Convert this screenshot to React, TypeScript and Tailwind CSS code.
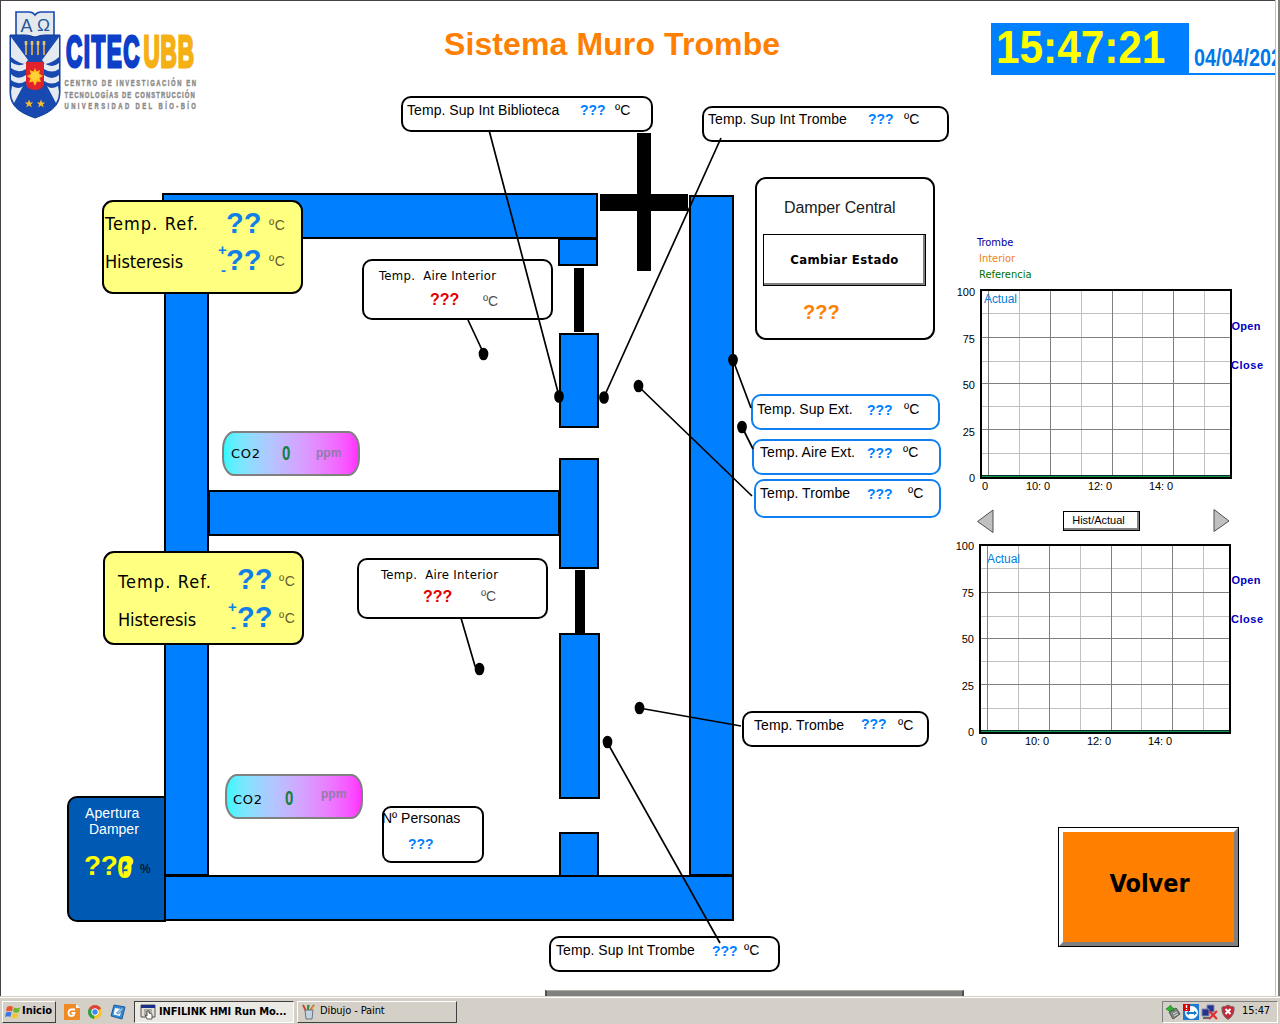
import React from "react";

const ARIAL = "font-['Liberation_Sans',Arial,sans-serif]";
const TAHOMA = "font-['DejaVu_Sans_Condensed','DejaVu_Sans',sans-serif] [font-stretch:condensed]";

/* A label pinned on the plan */
function T({ c, children }: { c: string; children: React.ReactNode }) {
  return <span className={`absolute whitespace-pre leading-none ${c}`}>{children}</span>;
}

function Wall({ c }: { c: string }) {
  return <div className={`absolute border-2 border-black bg-[#0080ff] ${c}`} />;
}

function Box({ c, children }: { c: string; children?: React.ReactNode }) {
  return <div className={`absolute border-2 ${c}`}>{children}</div>;
}

function Logo() {
  return (
    <svg width="192" height="112" viewBox="8 8 192 112" className="ml-2 mt-2 block">
      <path d="M16 12 H29 Q33 12 35 15 Q37 12 41 12 H54 V37 H16 Z" fill="#e4e9ee" stroke="#1749b0" strokeWidth="1.6" />
      <path d="M10 35 H24 Q32 35 35 38 Q38 35 46 35 H60 V92 C60 107 49 113 35 118 C21 113 10 107 10 92 Z" fill="#1749b0" stroke="#0f3c98" />
      <path d="M11 37 L28 60 L25 64 Q18 63 11 57 Z M59 37 L42 60 L45 64 Q52 63 59 57 Z" fill="#e4eaf0" />
      <path d="M11 62 Q18 68 26 63 V69 Q18 74 11 68 Z M11 74 Q18 81 26 75 V81 Q18 86 11 80 Z M44 63 Q52 69 59 63 V69 Q52 74 44 69 Z M44 75 Q52 81 59 75 V81 Q52 86 44 81 Z" fill="#e4eaf0" />
      <path d="M12 86 Q19 90 23 86 L14 103 Q11 98 11 92 Z M58 86 Q51 90 47 86 L56 103 Q59 98 59 92 Z" fill="#e4eaf0" />
      <path d="M26 43 V55 M32 43 V55 M38 43 V55 M44 43 V55" stroke="#c79b5b" strokeWidth="2" />
      <path d="M26 41 V45 M32 41 V45 M38 41 V45 M44 41 V45" stroke="#e9c06b" strokeWidth="2.600" />
      <path d="M26 62 H44 V82 Q44 90 35 90 Q26 90 26 82 Z" fill="#e0232a" />
      <path d="M35 68 L36.5 71.5 L40 70 L39 73.5 L43 76 L39.500 78 L41 82 L37 81.500 L35 86 L33 81.500 L29 82.500 L30.500 78.500 L27 76 L31 74 L29.500 70 L33.500 71.500 Z" fill="#ffc31f" />
      <circle cx="35" cy="76" r="4" fill="#ffd23b" />
      <path d="M29 99.500 l1.200 3 h3 l-2.400 1.900 1 3.100 -2.800 -1.900 -2.800 1.900 1 -3.100 -2.400 -1.900 h3 Z M41 99.500 l1.200 3 h3 l-2.400 1.900 1 3.100 -2.800 -1.900 -2.800 1.900 1 -3.100 -2.400 -1.900 h3 Z" fill="#f5bc2c" />
      <g className={ARIAL}>
        <text x="20.500" y="31.500" fontSize="18" fontWeight="normal" fill="#27559e" textLength="12" lengthAdjust="spacingAndGlyphs">Α</text>
        <text x="37" y="30.500" fontSize="17" fontWeight="normal" fill="#27559e" textLength="13" lengthAdjust="spacingAndGlyphs">Ω</text>
        <g transform="translate(66 0) scale(.5 1)" fontSize="45" fontWeight="bold" strokeWidth="3" letterSpacing="3">
          <text x="0" y="67.500" fill="#0d3fc8" stroke="#0d3fc8" textLength="150">CITEC</text>
          <text x="155" y="67.500" fill="#f5b016" stroke="#f5b016" textLength="104">UBB</text>
        </g>
      </g>
      <g className={ARIAL} fontSize="9.500" fontWeight="bold" fill="#8c8c8c" stroke="#8c8c8c" strokeWidth=".5">
        <g transform="translate(64.500 0) scale(.62 1)" letterSpacing="1">
          <text x="0" y="86.500" textLength="213">CENTRO DE INVESTIGACIÓN EN</text>
          <text x="0" y="98" textLength="211">TECNOLOGÍAS DE CONSTRUCCIÓN</text>
          <text x="0" y="109" textLength="213">UNIVERSIDAD DEL BÍO-BÍO</text>
        </g>
      </g>
    </svg>
  );
}

function Header() {
  return (
    <header className={`flex h-[125px] w-[1275px] overflow-hidden ${ARIAL} font-bold`}>
      <div className="w-[444px]"><Logo /></div>
      <h1 className="mt-7 w-[547px] text-[32px] leading-none tracking-[.1px] whitespace-nowrap text-[#ff8000]">Sistema Muro Trombe</h1>
      <div className="mt-[23px] h-[52px] w-[198px] bg-[#0080ff] pt-[1px] pl-[5px] text-[46px] leading-none text-[#ffff00]">
        <span className="inline-block origin-left scale-x-[.92]">15:47:21</span>
      </div>
      <div className="mt-[23px] h-[52px] w-[86px] overflow-hidden border-b-2 border-[#0080ff] pt-[24px] pl-[5px] text-[23px] leading-none whitespace-nowrap text-[#0078e8]">
        <span className="inline-block origin-left scale-x-[.86]">04/04/2022</span>
      </div>
    </header>
  );
}

function Chart({ c, ax, ay, cx, dy }: { c: string; ax: number; ay: number; cx: number; dy: number }) {
  return (
    <svg width="323" height="210" viewBox="0 0 323 210" className={`block shrink-0 ${c}`}>
      <g shapeRendering="crispEdges" stroke="#c0c0c0">
        {[67.5, 129.5, 190.5, 252.5].map((x) => <path key={x} d={`M${x} 6V193`} />)}
        {[29.5, 77.5, 122.5, 169.5].map((y) => <path key={y} d={`M29 ${y}H279`} />)}
      </g>
      <g shapeRendering="crispEdges" stroke="#808080">
        {[36.5, 98.5, 160.5, 221.5].map((x) => <path key={x} d={`M${x} 6V193`} />)}
        {[53.5, 99.5, 145.5].map((y) => <path key={y} d={`M29 ${y}H279`} />)}
      </g>
      <g shapeRendering="crispEdges">
        <rect x="29" y="6" width="250" height="188" fill="none" stroke="#000" strokeWidth="2" />
        <path d="M30 191.500H278" stroke="#003030" />
        <path d="M30 192.500H278" stroke="#169447" />
      </g>
      <g className="font-['Liberation_Sans',Arial,sans-serif] text-[11px]">
        <g textAnchor="end">
          <text x="23" y={12 - dy}>100</text>
          <text x="23" y={59 - dy}>75</text>
          <text x="23" y={105 - dy}>50</text>
          <text x="23" y={152 - dy}>25</text>
          <text x="23" y={198 - dy}>0</text>
        </g>
        <text x="30" y="205.500">0</text>
        <text x="74" y="205.500" textLength="24">10: 0</text>
        <text x="136" y="205.500" textLength="24">12: 0</text>
        <text x="197" y="205.500" textLength="24">14: 0</text>
        <text x={ax} y={ay} fontSize="12" fill="#0080e0" textLength="33">Actual</text>
        <g fill="#0000c0" fontWeight="bold">
          <text x={cx} y={46 - dy} textLength="29">Open</text>
          <text x={cx - 0.5} y={85 - dy} textLength="32">Close</text>
        </g>
      </g>
    </svg>
  );
}

function Trends() {
  return (
    <aside className="ml-[952px] flex w-[323px] flex-col pt-[112px]">
      <div className={`flex flex-col gap-[5px] pl-[27px] text-[11px] leading-[11px] ${TAHOMA}`}>
        <span className="-ml-[2px] text-[#0000a0]">Trombe</span>
        <span className="text-[#f08020]">Interior</span>
        <span className="text-[#007000]">Referencia</span>
      </div>
      <Chart c="mt-[4px]" ax={32} ay={19} cx={279.5} dy={0} />
      <div className="mt-[15px] flex h-[24px] w-[278px] justify-between pl-[25px]">
        <svg width="17" height="24" className="block"><path d="M.5 12.500L16 1V23.500Z" fill="#c0c0c0" stroke="#505050" /></svg>
        <div className={`ml-[69px] mr-auto mt-[2px] flex h-[20px] w-[77px] items-center justify-center border border-black bg-white text-[11px] shadow-[inset_-2px_-2px_0_#808080] ${ARIAL}`}>
          <span className="pr-[6px] pb-px">Hist/Actual</span>
        </div>
        <svg width="17" height="24" className="block"><path d="M1 .500V22.500L16 12Z" fill="#c0c0c0" stroke="#505050" /></svg>
      </div>
      <Chart c="-ml-px mt-[6px]" ax={36} ay={24} cx={280.5} dy={1} />
      <button className={`mt-[78px] ml-[106px] h-[120px] w-[181px] border border-black text-[25px] font-bold text-black ${TAHOMA}`}>
        <span className="flex h-full w-full items-center justify-center border-4 border-t-white border-r-[#808080] border-b-[#808080] border-l-white bg-[#ff8000] pb-[7px] pl-[2px]">Volver</span>
      </button>
    </aside>
  );
}

/* Reference temperature and hysteresis card */
function RefCard({ c, pad }: { c: string; pad: string }) {
  return (
    <Box c={`h-[94px] w-[201px] rounded-[11px] border-black bg-[#ffff80] ${c}`}>
      <div className={`absolute h-full w-full text-black ${pad}`}>
        <T c={`left-[2px] top-[13px] text-[18px] tracking-[1.1px] ${TAHOMA}`}>Temp. Ref.</T>
        <T c={`left-[2px] top-[51px] text-[18px] tracking-[-0.1px] ${TAHOMA}`}>Histeresis</T>
      </div>
    </Box>
  );
}

function Plan() {
  const q = "text-[14px] font-bold text-[#0080ff]";
  const n = "text-[14px] tracking-[.06px]";
  const aire = "text-[13px] tracking-[.3px]";
  const unit = "text-[14px] tracking-[.6px] text-[#60602c]";
  return (
    <div className={`absolute inset-0 text-black ${ARIAL}`}>
      <Wall c="left-[164px] top-[220px] h-[656px] w-[45px]" />
      <Wall c="left-[162px] top-[193px] h-[46px] w-[436px]" />
      <Wall c="left-[558px] top-[238px] h-[28px] w-[40px]" />
      <Wall c="left-[559px] top-[333px] h-[95px] w-[40px]" />
      <Wall c="left-[559px] top-[458px] h-[111px] w-[40px]" />
      <Wall c="left-[559px] top-[633px] h-[166px] w-[41px]" />
      <Wall c="left-[559px] top-[832px] h-[45px] w-[40px]" />
      <Wall c="left-[208px] top-[490px] h-[46px] w-[352px]" />
      <Wall c="left-[689px] top-[195px] h-[681px] w-[45px]" />
      <Wall c="left-[164px] top-[875px] h-[46px] w-[570px]" />
      <div className="absolute left-[574px] top-[268px] h-[64px] w-[10px] bg-black" />
      <div className="absolute left-[575px] top-[570px] h-[63px] w-[10px] bg-black" />
      <div className="absolute left-[637px] top-[133px] h-[138px] w-[14px] bg-black" />
      <div className="absolute left-[600px] top-[194px] h-[17px] w-[88px] bg-black" />

      <Box c="left-[401px] top-[96px] h-[36px] w-[252px] rounded-[10px] border-black bg-white" />
      <T c={`left-[407px] top-[103px] ${n}`}>Temp. Sup Int Biblioteca</T>
      <T c={`left-[580px] top-[103px] ${q}`}>???</T>
      <T c={`left-[615px] top-[103px] ${n}`}>ºC</T>

      <Box c="left-[702px] top-[106px] h-[36px] w-[247px] rounded-[10px] border-black bg-white" />
      <T c={`left-[708px] top-[112px] ${n}`}>Temp. Sup Int Trombe</T>
      <T c={`left-[868px] top-[112px] ${q}`}>???</T>
      <T c={`left-[904px] top-[112px] ${n}`}>ºC</T>

      <Box c="left-[362px] top-[259px] h-[61px] w-[191px] rounded-[10px] border-black bg-white" />
      <T c={`left-[379px] top-[269px] ${aire} ${TAHOMA}`}>Temp.  Aire Interior</T>
      <T c="left-[430px] top-[292px] text-[16px] font-bold text-[#e00000]">???</T>
      <T c="left-[483px] top-[294px] text-[14px] text-[#505050]">ºC</T>

      <Box c="left-[357px] top-[558px] h-[61px] w-[191px] rounded-[10px] border-black bg-white" />
      <T c={`left-[381px] top-[568px] ${aire} ${TAHOMA}`}>Temp.  Aire Interior</T>
      <T c="left-[423px] top-[589px] text-[16px] font-bold text-[#e00000]">???</T>
      <T c="left-[481px] top-[589px] text-[14px] text-[#505050]">ºC</T>

      <Box c="left-[755px] top-[177px] h-[163px] w-[180px] rounded-[11px] border-black bg-white" />
      <T c="left-[784px] top-[200px] text-[16px] tracking-[-.1px] text-[#202020]">Damper Central</T>
      <div className={`absolute left-[763px] top-[234px] flex h-[52px] w-[163px] items-center justify-center border border-black bg-white text-[13px] font-bold tracking-[.35px] shadow-[inset_-2px_-2px_0_#808080] ${TAHOMA}`}>Cambiar Estado</div>
      <T c="left-[803px] top-[302px] text-[20px] font-bold text-[#ff8000]">???</T>

      <Box c="left-[751px] top-[394px] h-[36px] w-[189px] rounded-[10px] border-[#1080f0] bg-white" />
      <T c={`left-[757px] top-[402px] ${n}`}>Temp. Sup Ext.</T>
      <T c={`left-[867px] top-[403px] ${q}`}>???</T>
      <T c={`left-[904px] top-[402px] ${n}`}>ºC</T>
      <Box c="left-[752px] top-[439px] h-[36px] w-[189px] rounded-[10px] border-[#1080f0] bg-white" />
      <T c={`left-[760px] top-[445px] ${n}`}>Temp. Aire Ext.</T>
      <T c={`left-[867px] top-[446px] ${q}`}>???</T>
      <T c={`left-[903px] top-[445px] ${n}`}>ºC</T>
      <Box c="left-[754px] top-[479px] h-[39px] w-[187px] rounded-[10px] border-[#1080f0] bg-white" />
      <T c={`left-[760px] top-[486px] ${n}`}>Temp. Trombe</T>
      <T c={`left-[867px] top-[487px] ${q}`}>???</T>
      <T c={`left-[908px] top-[486px] ${n}`}>ºC</T>

      <Box c="left-[742px] top-[711px] h-[36px] w-[187px] rounded-[10px] border-black bg-white" />
      <T c={`left-[754px] top-[718px] ${n}`}>Temp. Trombe</T>
      <T c={`left-[861px] top-[717px] ${q}`}>???</T>
      <T c={`left-[898px] top-[718px] ${n}`}>ºC</T>

      <Box c="left-[549px] top-[936px] h-[36px] w-[231px] rounded-[10px] border-black bg-white" />
      <T c={`left-[556px] top-[943px] ${n}`}>Temp. Sup Int Trombe</T>
      <T c={`left-[712px] top-[944px] ${q}`}>???</T>
      <T c={`left-[744px] top-[943px] ${n}`}>ºC</T>

      <Box c="left-[382px] top-[806px] h-[57px] w-[102px] rounded-[9px] border-black bg-white" />
      <T c="left-[382px] top-[811px] text-[14px]">Nº Personas</T>
      <T c={`left-[408px] top-[837px] ${q}`}>???</T>

      <RefCard c="left-[102px] top-[200px]" pad="left-[-1px] top-0" />
      <T c="left-[226px] top-[209px] text-[29px] font-bold text-[#1080e8]">??</T>
      <T c={`left-[269px] top-[218px] ${unit}`}>ºC</T>
      <T c="left-[226px] top-[246px] text-[29px] font-bold text-[#1080e8]">??</T>
      <T c={`left-[269px] top-[254px] ${unit}`}>ºC</T>
      <T c="left-[218px] top-[242px] text-[15px] font-bold text-[#1080e8]">+</T>
      <T c="left-[221px] top-[262px] text-[15px] font-bold text-[#1080e8]">-</T>

      <RefCard c="left-[103px] top-[551px]" pad="left-[11px] top-[7px]" />
      <T c="left-[237px] top-[565px] text-[29px] font-bold text-[#1080e8]">??</T>
      <T c={`left-[279px] top-[574px] ${unit}`}>ºC</T>
      <T c="left-[237px] top-[603px] text-[29px] font-bold text-[#1080e8]">??</T>
      <T c={`left-[279px] top-[611px] ${unit}`}>ºC</T>
      <T c="left-[228px] top-[599px] text-[15px] font-bold text-[#1080e8]">+</T>
      <T c="left-[231px] top-[619px] text-[15px] font-bold text-[#1080e8]">-</T>

      <Box c="left-[222px] top-[431px] h-[45px] w-[138px] rounded-[12px/18px] border-[#808080] bg-linear-to-r from-[#30f8ff] to-[#ff30ff]" />
      <T c="left-[231px] top-[447px] text-[13px] tracking-[.7px] font-['DejaVu_Sans',sans-serif]">CO2</T>
      <T c="left-[282px] top-[443px] origin-left scale-x-[.75] text-[20px] font-bold text-[#108040]">0</T>
      <T c="left-[316px] top-[447px] text-[12px] font-bold text-[#907ca8]">ppm</T>
      <Box c="left-[225px] top-[774px] h-[45px] w-[138px] rounded-[12px/18px] border-[#808080] bg-linear-to-r from-[#30f8ff] to-[#ff30ff]" />
      <T c="left-[233px] top-[793px] text-[13px] tracking-[.7px] font-['DejaVu_Sans',sans-serif]">CO2</T>
      <T c="left-[285px] top-[788px] origin-left scale-x-[.75] text-[20px] font-bold text-[#108040]">0</T>
      <T c="left-[321px] top-[788px] text-[12px] font-bold text-[#907ca8]">ppm</T>

      <Box c="left-[67px] top-[796px] h-[126px] w-[99px] rounded-l-[10px] border-black bg-[#0059b3]" />
      <T c="left-[85px] top-[806px] text-[14px] tracking-[.1px] text-white">Apertura</T>
      <T c="left-[89px] top-[822px] text-[14px] text-white">Damper</T>
      <T c="left-[84px] top-[852px] text-[28px] font-bold tracking-[-.3px] text-[#ffff00]">???</T>
      <T c="left-[117px] top-[854px] origin-left scale-x-[.95] text-[29px] font-bold text-[#ffff00]">0</T>
      <T c="left-[140px] top-[863px] text-[12px]">%</T>

      <svg className="absolute inset-0" width="1275" height="990" fill="none" stroke="#000" strokeWidth="1.700">
        <path d="M489 130L559 396M721 138L604 397M468 320L483 352M733 360L751 408M742 427L753 449M638 386L752 496M461 618L475 666L479 669M639 708L741 726M607 742L720 943" />
        <g fill="#000">
          {[[559, 396.5], [604, 397.5], [483.5, 354], [733, 360], [742, 427], [638.5, 386], [479.5, 669], [639.5, 708], [607.5, 742]].map(([x, y]) => (
            <ellipse key={`${x}-${y}`} cx={x} cy={y} rx="4" ry="5.500" />
          ))}
        </g>
      </svg>
    </div>
  );
}

function Taskbar() {
  const raised = "border border-t-white border-l-white border-r-[#404040] border-b-[#404040]";
  return (
    <footer className={`relative flex h-[28px] items-center border-t border-[#d4d0c8] bg-[#d4d0c8] text-[11px] text-black shadow-[inset_0_1px_0_#fff] ${TAHOMA}`}>
      <div className={`mt-[2px] ml-[2px] flex h-[22px] w-[54px] items-center gap-[1px] pl-[2px] font-bold ${raised}`}>
        <svg width="16" height="16" viewBox="0 0 16 16">
          <path d="M2 3Q5 1 8 3L7 7.500Q4 6 1 7.500Z" fill="#e8562a" />
          <path d="M9 3.500Q12 5 15 3.500L14 8Q11 9.500 8 8Z" fill="#6cb52d" />
          <path d="M1 8.500Q4 7 6.500 8.500L5.500 13Q3 11.500 0 13Z" fill="#3d7ae0" />
          <path d="M8 9Q11 10.500 13.500 9L12.500 13.500Q9.500 15 6.700 13.500Z" fill="#f7c52b" />
        </svg>
        <span>Inicio</span>
      </div>
      <div className="mt-[2px] ml-[8px] flex items-center gap-[7px]">
        <svg width="16" height="16" viewBox="0 0 16 16">
          <path d="M0 0H12L16 4V16H0Z" fill="#f08a24" /><path d="M12 0V4H16Z" fill="#fff" />
          <path d="M11 5.500H7Q4.500 6 4.500 9Q4.500 12 7.500 12Q10 12 10.500 9H7.500" fill="none" stroke="#fff" strokeWidth="1.800" />
        </svg>
        <svg width="16" height="16" viewBox="0 0 16 16">
          <circle cx="8" cy="8" r="7" fill="#f5c62c" />
          <path d="M8 8L1.900 4.500A7 7 0 0 1 14.100 4.500Z" fill="#de4335" />
          <path d="M8 8L1.900 4.500A7 7 0 0 0 7 15Z" fill="#2fa04e" />
          <circle cx="8" cy="8" r="3.300" fill="#4286f0" stroke="#fff" />
        </svg>
        <svg width="16" height="16" viewBox="0 0 16 16">
          <path d="M4 1L15 3L12 15L1 12Z" fill="#348bd3" stroke="#1c5d9e" />
          <path d="M5 4L11.500 5L10 12L3.500 10.500Z" fill="#fff" />
          <path d="M6.500 9L12 3.500L13.500 5L8.500 10Z" fill="#9bd3f8" stroke="#1c5d9e" strokeWidth=".7" />
        </svg>
      </div>
      <div className="mt-[2px] ml-[8px] flex h-[22px] w-[160px] items-center gap-[3px] border border-t-[#404040] border-r-white border-b-white border-l-[#404040] bg-[#ebe9e4] pl-[5px] font-bold">
        <svg width="16" height="16" viewBox="0 0 16 16">
          <path d="M1 1H15V13H1Z" fill="#e4e0d4" stroke="#555" /><path d="M1 1H15V4H1Z" fill="#1c2f8c" />
          <path d="M4 6H12M4 8H12M4 10H8" stroke="#777" />
          <path d="M7 7V12L5 11L7 15H12V10L9 9V7Z" fill="#fff" stroke="#333" strokeWidth=".8" />
        </svg>
        <span className="pt-px whitespace-nowrap tracking-[-0.12px]">INFILINK HMI Run Mo...</span>
      </div>
      <div className={`mt-[2px] ml-[3px] flex h-[22px] w-[160px] items-center gap-[3px] pl-[3px] ${raised}`}>
        <svg width="16" height="16" viewBox="0 0 16 16">
          <path d="M5 7L2 1M7 7L7 1M9 7L13 1" stroke="#c4442c" strokeWidth="1.800" />
          <path d="M7 6L8 1" stroke="#3a8a3c" strokeWidth="1.500" /><path d="M10 7L13 2" stroke="#e1b13a" strokeWidth="1.500" />
          <path d="M4 6H12L11 15H5Z" fill="#c3d3df" stroke="#68747e" />
        </svg>
        <span className="tracking-[-.1px]">Dibujo - Paint</span>
      </div>
      <div className="mt-[2px] mr-[2px] ml-auto flex h-[22px] w-[116px] items-center gap-[2px] border border-t-[#808080] border-r-white border-b-white border-l-[#808080] pl-[2px]">
        <svg width="16" height="16" viewBox="0 0 16 16">
          <path d="M4 8L11 4L15 10L8 15Z" fill="#7e8580" stroke="#4c514e" /><path d="M8 10L12 8M9 12L13 10" stroke="#ddd" />
          <path d="M1 5L6 1V3Q9 3 9 7Q7 5 6 6V8Z" fill="#2fb52f" stroke="#16751b" strokeWidth=".6" />
        </svg>
        <svg width="16" height="16" viewBox="0 0 16 16">
          <rect width="16" height="16" fill="#1d78d0" /><circle cx="8.500" cy="8.500" r="6.500" fill="#fff" />
          <path d="M3 9L6 6.500V8H11V6.500L14 9L11 11.500V10H6V11.500Z" fill="#1d78d0" />
          <rect width="7" height="7" fill="#e00000" /><path d="M3.500 1V4M3.500 5V6" stroke="#fff" strokeWidth="1.400" />
        </svg>
        <svg width="17" height="16" viewBox="0 0 17 16">
          <path d="M6 1H13V8H6Z" fill="#24348b" stroke="#8189b6" /><path d="M1 5H8V12H1Z" fill="#24348b" stroke="#8189b6" />
          <path d="M2 14H8" stroke="#666" strokeWidth="2" /><path d="M8 7L16 15M16 7L8 15" stroke="#e03030" strokeWidth="2.200" />
        </svg>
        <svg width="16" height="16" viewBox="0 0 16 16">
          <path d="M8 1Q11 3 14 3Q15 11 8 15.500Q1 11 2 3Q5 3 8 1Z" fill="#c6283a" stroke="#766" />
          <path d="M5.500 5L10.500 10M10.500 5L5.500 10" stroke="#fff" strokeWidth="2" />
        </svg>
        <span className="ml-[4px] tracking-[-.1px]">15:47</span>
      </div>
    </footer>
  );
}

export default function App() {
  return (
    <div className="flex h-[1024px] w-[1280px] flex-col overflow-hidden bg-white">
      <main className="relative flex h-[996px] shrink-0 flex-col overflow-hidden">
        <div className="pointer-events-none absolute inset-0 border-t border-l border-[#484048]" />
        <div className="absolute top-0 right-0 h-full w-[5px] border-r-2 border-l border-r-[#808078] border-l-[#c8c4bc] bg-white" />
        <div className="absolute bottom-0 left-[545px] h-[6px] w-[419px] border-t border-r-2 border-l-2 border-[#505050] border-t-[#b0aca4] bg-[#808080]" />
        <Header />
        <Trends />
        <Plan />
      </main>
      <Taskbar />
    </div>
  );
}
